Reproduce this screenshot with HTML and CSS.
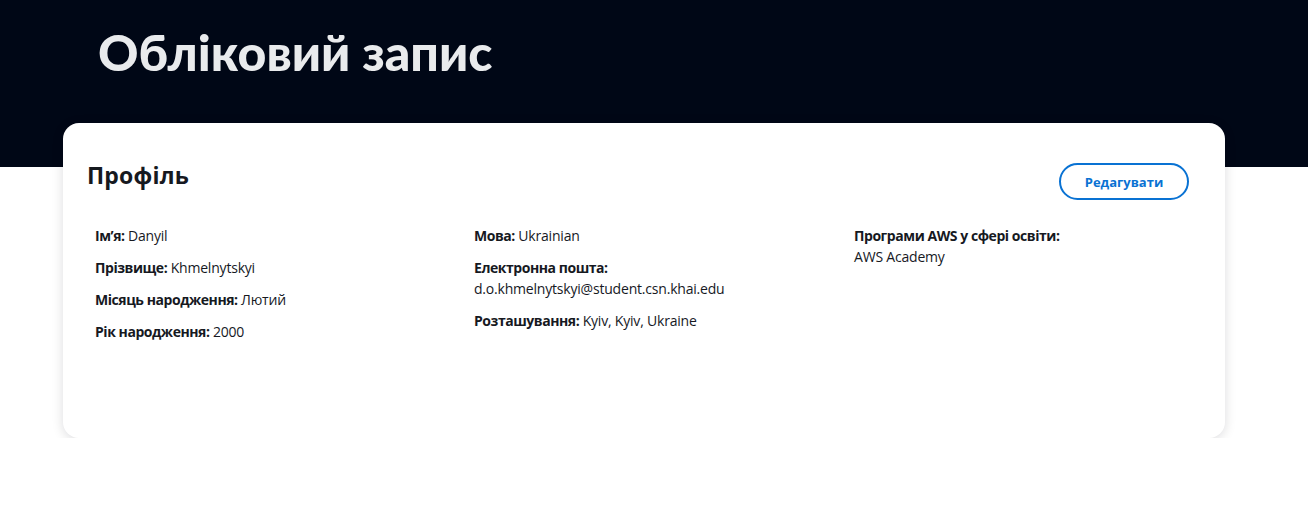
FILE: index.html
```html
<!DOCTYPE html>
<html lang="uk">
<head>
<meta charset="utf-8">
<link rel="stylesheet" href="styles.css">
</head>
<body>
<header class="hero">
  <h1 class="hero-title">Обліковий запис</h1>
</header>
<main class="page">
  <section class="card">
    <div class="card-head">
      <h2 class="card-title">Профіль</h2>
      <button class="btn-edit">Редагувати</button>
    </div>
    <div class="grid">
      <div class="col">
        <div class="item"><b>Ім’я:</b> Danyil</div>
        <div class="item"><b>Прізвище:</b> Khmelnytskyi</div>
        <div class="item"><b>Місяць народження:</b> Лютий</div>
        <div class="item"><b>Рік народження:</b> 2000</div>
      </div>
      <div class="col">
        <div class="item"><b>Мова:</b> Ukrainian</div>
        <div class="item"><b>Електронна пошта:</b><br>d.o.khmelnytskyi@student.csn.khai.edu</div>
        <div class="item"><b>Розташування:</b> Kyiv, Kyiv, Ukraine</div>
      </div>
      <div class="col">
        <div class="item"><b>Програми AWS у сфері освіти:</b><br>AWS Academy</div>
      </div>
    </div>
  </section>
</main>
</body>
</html>
```
FILE: styles.css
```css
* { box-sizing: border-box; }
html, body { margin: 0; padding: 0; background: #ffffff; }
body { font-family: "Open Sans", "Noto Sans", sans-serif; color: #000716; }

.hero {
  background: #000716;
  height: 167px;
  padding: 22px 0 0 98px;
}
.hero-title {
  margin: 0;
  font-family: Lato, "Open Sans", sans-serif;
  font-size: 50px;
  line-height: 60px;
  font-weight: 900;
  color: #e9ebed;
}

.page { padding: 0 83px 0 63px; }

.card {
  margin-top: -44px;
  background: #fff;
  border-radius: 16px;
  box-shadow: 0 2px 12px rgba(0, 7, 22, 0.14);
  height: 315px;
  padding: 40px 36px 20px 24px;
}
.card-head {
  display: flex;
  justify-content: space-between;
  align-items: center;
}
.card-title {
  margin: 0;
  font-size: 23px;
  line-height: 28px;
  font-weight: 700;
  color: #16191f;
  position: relative;
  top: -7px;
  letter-spacing: 0.2px;
}
.btn-edit {
  font-family: inherit;
  font-size: 13px;
  font-weight: 700;
  color: #0972d3;
  background: #fff;
  border: 2px solid #0972d3;
  border-radius: 20px;
  width: 130px;
  height: 37px;
  padding: 0;
}

.grid {
  display: grid;
  grid-template-columns: 379px 380px 1fr;
  margin-top: 25px;
}
.col {
  display: flex;
  flex-direction: column;
  gap: 11px;
  padding-left: 8px;
}
.item {
  font-size: 14px;
  line-height: 21px;
  letter-spacing: -0.2px;
  color: #16191f;
}
.item b { font-weight: 700; letter-spacing: -0.45px; }
```
